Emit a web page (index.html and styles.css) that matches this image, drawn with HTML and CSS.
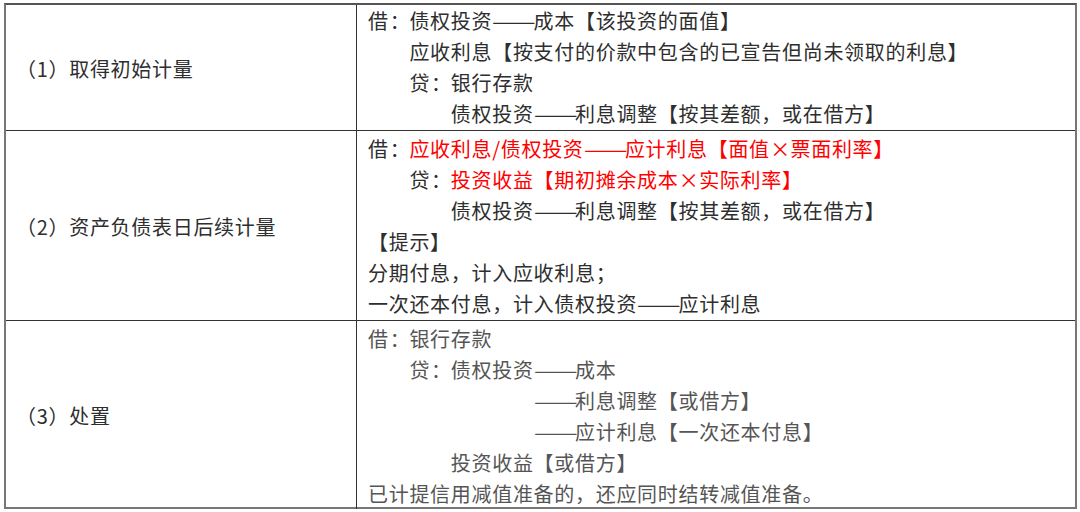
FILE: index.html
```html
<!DOCTYPE html>
<html lang="zh-CN">
<head>
<meta charset="utf-8">
<link rel="stylesheet" href="styles.css">
</head>
<body>
<div class="tbl">
  <div class="cell head r1">（1）取得初始计量</div>
  <div class="cell body r1">
    <div class="ln">借<span class="c">：</span>债权投资<span class="d"><span class="dd">——</span></span>成本【该投资的面值】</div>
    <div class="ln i2">应收利息【按支付的价款中包含的已宣告但尚未领取的利息】</div>
    <div class="ln i2">贷<span class="c">：</span>银行存款</div>
    <div class="ln i4">债权投资<span class="d"><span class="dd">——</span></span>利息调整【按其差额，或在借方】</div>
  </div>

  <div class="cell head r2">（2）资产负债表日后续计量</div>
  <div class="cell body r2 pad">
    <div class="ln">借<span class="c">：</span><span class="red">应收利息/债权投资<span class="d"><span class="dd">——</span></span>应计利息【面值<span class="x">×</span>票面利率】</span></div>
    <div class="ln i2">贷<span class="c">：</span><span class="red">投资收益【期初摊余成本<span class="x">×</span>实际利率】</span></div>
    <div class="ln i4">债权投资<span class="d"><span class="dd">——</span></span>利息调整【按其差额，或在借方】</div>
    <div class="ln">【提示】</div>
    <div class="ln">分期付息，计入应收利息；</div>
    <div class="ln">一次还本付息，计入债权投资<span class="d"><span class="dd">——</span></span>应计利息</div>
  </div>

  <div class="cell head r3">（3）处置</div>
  <div class="cell body r3 pad grey">
    <div class="ln">借<span class="c">：</span>银行存款</div>
    <div class="ln i2">贷<span class="c">：</span>债权投资<span class="d"><span class="dd">——</span></span>成本</div>
    <div class="ln i8"><span class="d"><span class="dd">——</span></span>利息调整【或借方】</div>
    <div class="ln i8"><span class="d"><span class="dd">——</span></span>应计利息【一次还本付息】</div>
    <div class="ln i4">投资收益【或借方】</div>
    <div class="ln">已计提信用减值准备的，还应同时结转减值准备。</div>
  </div>
</div>
</body>
</html>
```

FILE: styles.css
```css
html, body {
  margin: 0;
  padding: 0;
  background: #ffffff;
}

body {
  font-family: "Noto Sans CJK SC", "Noto Sans", sans-serif;
  font-size: 20px;
  letter-spacing: 0.7px;
  color: #2e2e2e;
  text-spacing-trim: space-all;
}

.tbl {
  margin: 3px 0 0 4px;
  width: 1073px;
  height: 506px;
  box-sizing: border-box;
  border: 2px solid #777777;
  border-top-color: #555555;
  display: grid;
  grid-template-columns: 351px 1fr;
  grid-template-rows: 126px 190px 1fr;
}

.cell {
  box-sizing: border-box;
  min-width: 0;
}

.r1, .r2 {
  border-bottom: 1px solid #333333;
}

.head {
  border-right: 1px solid #333333;
  display: flex;
  align-items: center;
  padding-left: 10px;
  padding-top: 1px;
}

.body {
  padding-left: 11px;
  line-height: 31px;
  white-space: nowrap;
}

.body.pad {
  padding-top: 2px;
}

.ln {
  height: 31px;
}

.ln.i2 { padding-left: 41.4px; }
.ln.i4 { padding-left: 82.8px; }
.ln.i8 { padding-left: 165.6px; }

.red {
  color: #ff0000;
}

.c {
  display: inline-block;
  width: 20.7px;
  padding-left: 1px;
  box-sizing: border-box;
  letter-spacing: 0;
  text-align: left;
}

.d {
  display: inline-block;
  width: 41.4px;
  letter-spacing: 0;
  text-align: left;
  white-space: nowrap;
}

.dd {
  display: inline-block;
  transform: scaleX(1.3);
  transform-origin: left center;
}

.x {
  display: inline-block;
  width: 20.7px;
  text-align: center;
  letter-spacing: 0;
}

.grey {
  color: #555555;
}
```
